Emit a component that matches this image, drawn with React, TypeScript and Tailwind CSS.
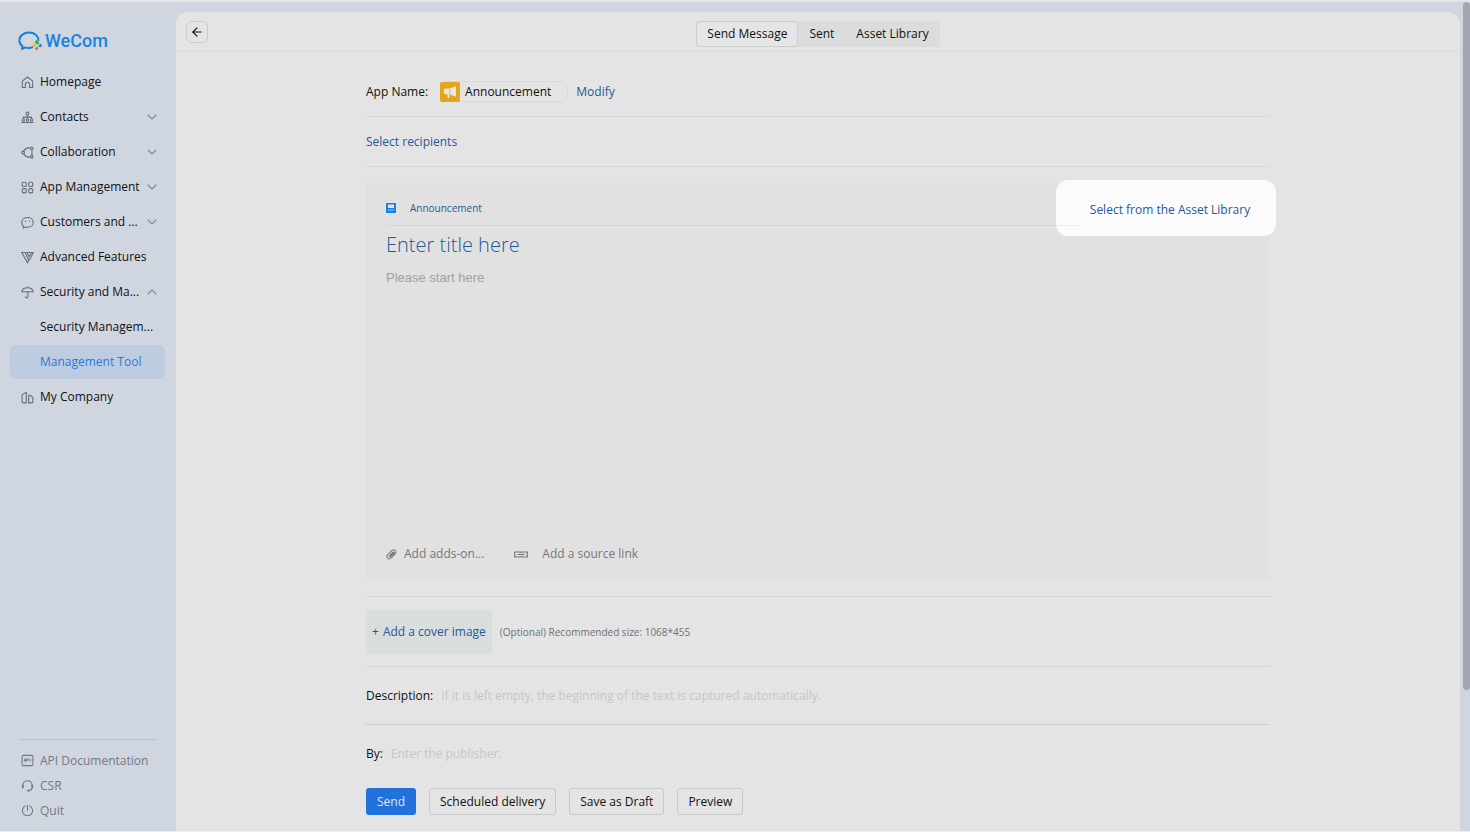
import type { ReactNode } from "react";
import { ArrowLeft, ChevronDown, ChevronUp } from "lucide-react";

const Icon = ({ children }: { children: ReactNode }) => (
  <svg
    viewBox="0 0 14 14"
    className="h-[13px] w-[13px] shrink-0"
    fill="none"
    stroke="currentColor"
    strokeWidth="1.15"
    strokeLinejoin="round"
    strokeLinecap="round"
    aria-hidden="true"
  >
    {children}
  </svg>
);

const icons: Record<string, ReactNode> = {
  home: (
    <Icon>
      <path d="M1.4 5.6 7 1.1l5.6 4.5v6.8H9.3V9.1a2.3 2.3 0 0 0-4.6 0v3.3H1.4z" />
    </Icon>
  ),
  contacts: (
    <Icon>
      <circle cx="7" cy="2.800" r="1.600" />
      <path d="M7 4.500v3M2.600 8V6.600h8.800V8" />
      <circle cx="2.600" cy="9.600" r="1.300" />
      <circle cx="7" cy="9.600" r="1.300" />
      <circle cx="11.400" cy="9.600" r="1.300" />
      <path d="M.8 12.400h3.600M5.200 12.400h3.600M9.600 12.400h3.600" />
    </Icon>
  ),
  collaboration: (
    <Icon>
      <circle cx="2.200" cy="7" r="1.500" />
      <circle cx="11.600" cy="2.500" r="1.400" />
      <circle cx="11.600" cy="11.500" r="1.400" />
      <path d="M3 5.700c1-2.300 3.600-4.100 7.200-3.500M3 8.300c1 2.300 3.600 4.100 7.200 3.500M11.800 4v6" />
    </Icon>
  ),
  apps: (
    <Icon>
      <rect x="1.300" y="1.300" width="4.400" height="4.600" rx="1.400" />
      <rect x="8.300" y="1.300" width="4.400" height="4.600" rx="1.400" />
      <rect x="1.300" y="8.200" width="4.400" height="4.600" rx="1.400" />
      <rect x="8.300" y="8.200" width="4.400" height="4.600" rx="1.400" />
    </Icon>
  ),
  customers: (
    <Icon>
      <path d="M7 1.700c3.500 0 6.200 2.200 6.200 5.200S10.500 12.100 7 12.100c-.8 0-1.600-.1-2.300-.3L2.300 12.900l.2-2.200C1.400 9.700.8 8.400.8 6.900.8 3.900 3.500 1.700 7 1.700z" />
      <path d="M4.900 5.300v.6M9.100 5.300v.6" />
    </Icon>
  ),
  features: (
    <Icon>
      <path d="M.8 1.700h3.600l3.900 7.900-1.200 3.200z" />
      <path d="M6.300 1.700h7L9 9.700M6.300 1.700l2.500 4.400 1.900-3.400" />
    </Icon>
  ),
  security: (
    <Icon>
      <path d="M.8 6.200C1.100 3.400 3.700 1.900 7 1.900s5.900 1.500 6.200 4.300zM7 .8v1.100M7.400 6.200v5.400c0 1.500-2.500 1.600-2.700 0" />
    </Icon>
  ),
  company: (
    <Icon>
      <path d="M1.200 3.900 5.700 1.200v11.600H2.200a1 1 0 0 1-1-1zM8.300 4.600h1.500l3 2.200v5a1 1 0 0 1-1 1H8.300z" />
    </Icon>
  ),
  api: (
    <Icon>
      <rect x="1.200" y="1.500" width="11.600" height="11" rx="1.300" />
      <path d="M3.500 7.500 4.300 5.300l.8 2.200M6.400 7.500V5.300h1.300v1.100H6.600M10 5.300v2.200" />
    </Icon>
  ),
  csr: (
    <Icon>
      <path d="M2 8.500V6.700a5 4.900 0 0 1 10 0v2.800c0 1.700-1.200 2.700-3.200 2.700" />
      <path d="M1.900 6.900v2.300M12.100 6.900v2.300M7.300 12.400h1.500" strokeWidth="1.900" />
    </Icon>
  ),
  quit: (
    <Icon>
      <path d="M4.600 2.200a5.500 5.500 0 1 0 4.800 0M7 1.300v5.500" />
    </Icon>
  ),
};

type NavItem = { label: string; icon?: string; arrow?: "up" | "down"; active?: boolean };

const navItems: NavItem[] = [
  { label: "Homepage", icon: "home" },
  { label: "Contacts", icon: "contacts", arrow: "down" },
  { label: "Collaboration", icon: "collaboration", arrow: "down" },
  { label: "App Management", icon: "apps", arrow: "down" },
  { label: "Customers and ...", icon: "customers", arrow: "down" },
  { label: "Advanced Features", icon: "features" },
  { label: "Security and Ma...", icon: "security", arrow: "up" },
  { label: "Security Managem..." },
  { label: "Management Tool", active: true },
  { label: "My Company", icon: "company" },
];

const footerItems = [
  { label: "API Documentation", icon: "api" },
  { label: "CSR", icon: "csr" },
  { label: "Quit", icon: "quit" },
];

const Logo = () => (
  <div className="flex h-6 items-center gap-[3px] pl-[18px] text-[#1683de]">
    <svg viewBox="0 0 24 20" className="h-5 w-6" fill="none" aria-hidden="true">
      <path
        d="M20.4 9.2C20.4 4.900 16.400 1.600 11 1.600S1.400 5 1.400 9.400c0 2.400 1.100 4.300 3.100 5.700L4 18l3.300-1.600c1.900.6 4.600.8 7-.1"
        stroke="currentColor"
        strokeWidth="2"
        strokeLinecap="round"
        strokeLinejoin="round"
      />
      <path d="m16.600 11.200 1.900-2.400 2.900 3.200-2 1.700z" fill="#3fae2a" />
      <path d="m20.200 14.900 2.500-2.400 1.300 2.200-1.900 1.800z" fill="#1683de" />
      <path d="m17 17.300 2.200-1.700 1.200 2-1.700 2.200z" fill="#e8632f" />
      <path d="m13.600 15 3-2.500 1.500 1.700-2.300 2.200z" fill="#f0b51d" />
    </svg>
    <span className="font-[Roboto] text-[18px] leading-6 font-medium">WeCom</span>
  </div>
);

const Sidebar = () => (
  <aside className="flex w-[176px] shrink-0 flex-col pt-[27px]">
    <Logo />
    <nav className="mt-3 flex flex-col gap-px pr-[11px] pl-[10px]">
      {navItems.map((item) => (
        <a
          key={item.label}
          href="#"
          className={`flex h-[34px] items-center rounded-md pr-[5px] pl-[11px] whitespace-nowrap ${
            item.active ? "bg-[#bdcce0] text-[#2d78dc]" : "text-[#111111]"
          }`}
        >
          <span className="w-[19px] shrink-0 text-[#666b75]">
            {item.icon && icons[item.icon]}
          </span>
          <span className="flex-1">{item.label}</span>
          {item.arrow === "down" && (
            <ChevronDown className="h-4 w-4 shrink-0 text-[#858a95]" strokeWidth={1.75} />
          )}
          {item.arrow === "up" && (
            <ChevronUp className="h-4 w-4 shrink-0 text-[#858a95]" strokeWidth={1.75} />
          )}
        </a>
      ))}
    </nav>
    <div className="mt-auto mr-5 mb-2 ml-5 border-t border-[#bac1cb] pt-2 text-[#737984]">
      {footerItems.map((item) => (
        <a
          key={item.label}
          href="#"
          className="flex h-[25px] items-center pl-px whitespace-nowrap"
        >
          <span className="w-[19px] shrink-0">{icons[item.icon]}</span>
          {item.label}
        </a>
      ))}
    </div>
  </aside>
);

const Tabs = () => (
  <div className="flex h-[26px] bg-[#dadddc]">
    <button className="rounded border border-[#cbcdcc] bg-[#e5e5e5] px-[10px]">
      Send Message
    </button>
    <button className="px-[11px]">Sent</button>
    <button className="px-[11px]">Asset Library</button>
  </div>
);

const Editor = () => (
  <section className="relative mt-4 flex min-h-[397px] flex-col bg-[#e1e1e1] px-5 pb-3">
    <div className="absolute -top-[3px] -right-[6px] flex h-14 w-[220px] items-center justify-center rounded-xl bg-[#fbfbfb] pt-1 pl-2">
      <a href="#" className="whitespace-nowrap text-[#25599b]">
        Select from the Asset Library
      </a>
    </div>
    <div className="relative mr-[169px] flex h-[43px] items-center border-b border-black/5 pt-2 text-[10px] font-medium text-[#25599b]">
      <svg viewBox="0 0 10 10" className="mr-[14px] h-[10px] w-[10px]" aria-hidden="true">
        <rect width="10" height="10" fill="#1485e6" />
        <path d="M2 1.500h6v3.500H2z" fill="#e1e1e1" />
        <path d="M2 6.500h6v1H2z" fill="#8fc0ec" />
      </svg>
      Announcement
    </div>
    <input
      aria-label="Title"
      placeholder="Enter title here"
      className="mt-[2px] h-8 text-[20px] font-light outline-none placeholder:text-[#25599b]"
    />
    <textarea
      aria-label="Content"
      placeholder="Please start here"
      className="mt-[10px] flex-1 resize-none font-['Liberation_Sans',sans-serif] text-[13px] leading-4 outline-none placeholder:text-[#a0a0a0]"
    />
    <div className="flex h-7 items-center text-[#777777]">
      <button className="flex items-center gap-[7px]">
        <svg
          viewBox="0 0 12 12"
          className="h-[11px] w-[11px]"
          fill="none"
          stroke="currentColor"
          strokeWidth="1.1"
          strokeLinecap="round"
          strokeLinejoin="round"
          aria-hidden="true"
        >
          <path d="M3.800 8.200 8 3.900M1.600 6.300 6.300 1.700c2.500-2.300 5.900.8 3.800 3.300L5.700 9.800c-2.600 2.600-6.300-.7-4.100-3.500zM4.700 9l4.100-4.300c.8-1-.4-2-1.300-1.200L3.400 7.700" />
        </svg>
        Add adds-on...
      </button>
      <button className="ml-[30px] flex items-center gap-[14px]">
        <svg
          viewBox="0 0 14 7"
          className="h-[7px] w-[14px]"
          fill="none"
          stroke="currentColor"
          strokeWidth="1.200"
          aria-hidden="true"
        >
          <path d="M6.200 2V1H.7v5h5.500V5M7.800 2V1h5.500v5H7.800V5M3.500 3.500h7" />
        </svg>
        Add a source link
      </button>
    </div>
  </section>
);

const buttonClass = "h-[27px] rounded-[3px] border border-[#c8c8c8] px-[10px]";

const MessageForm = () => (
  <form className="mx-auto w-full max-w-[904px] pb-4">
    <div className="flex items-center border-b border-[#d8d8d8] pt-[29px] pb-[14px]">
      <span>App Name:</span>
      <span className="ml-3 flex h-[21px] items-center rounded-md border border-[#dadada] pr-4">
        <svg viewBox="0 0 20 20" className="-ml-px h-5 w-5" aria-hidden="true">
          <rect width="20" height="20" rx="2" fill="#e2a51d" />
          <path
            d="M5 6.500h4.300L16 4.200v10.600l-6.700-2.600v3.900H7.600v-3.900H5c-1.800-.6-1.800-5 0-5.700z"
            fill="#eee8dc"
          />
          <path d="M9.700 6.500v5.700" stroke="#e2a51d" strokeWidth=".7" />
        </svg>
        <span className="ml-[5px]">Announcement</span>
      </span>
      <a href="#" className="ml-2 text-[#25599b]">
        Modify
      </a>
    </div>
    <div className="flex h-[50px] items-center border-b border-[#d8d8d8]">
      <a href="#" className="text-[#25599b]">
        Select recipients
      </a>
    </div>
    <Editor />
    <div className="mt-4 flex items-center border-y border-[#d4d4d4] pt-[13px] pb-3">
      <button
        type="button"
        className="flex h-11 items-center gap-1 bg-[#d9dddd] px-[6px] text-[#25599b]"
      >
        <span>+</span>
        <span>Add a cover image</span>
      </button>
      <span className="ml-2 text-[10px] text-[#707070]">
        (Optional) Recommended size: 1068*455
      </span>
    </div>
    <div className="flex h-[58px] items-center gap-2 border-b border-[#cdcdcd]">
      <label htmlFor="description">Description:</label>
      <input
        id="description"
        placeholder="If it is left empty, the beginning of the text is captured automatically."
        className="flex-1 outline-none placeholder:text-[#c6c6c6]"
      />
    </div>
    <div className="flex h-[58px] items-center gap-2">
      <label htmlFor="publisher">By:</label>
      <input
        id="publisher"
        placeholder="Enter the publisher."
        className="flex-1 outline-none placeholder:text-[#c6c6c6]"
      />
    </div>
    <div className="mt-[5px] flex gap-[13px]">
      <button
        type="button"
        className="h-[27px] rounded-[3px] bg-[#2272dc] px-[11px] text-[#e4e4e4]"
      >
        Send
      </button>
      <button type="button" className={buttonClass}>
        Scheduled delivery
      </button>
      <button type="button" className={buttonClass}>
        Save as Draft
      </button>
      <button type="button" className={buttonClass}>
        Preview
      </button>
    </div>
  </form>
);

const App = () => {
  return (
    <div className="flex min-h-screen border-t-2 border-b-2 border-t-[#e4e4e4] border-b-[#e6effc] bg-[#d0d6e0] font-['Open_Sans','Noto_Sans',sans-serif] text-[12px] leading-4 text-[#111111]">
      <Sidebar />
      <main className="mt-[10px] min-w-0 flex-1 rounded-t-xl bg-[#e4e4e4]">
        <header className="grid h-10 grid-cols-[1fr_auto_1fr] items-center border-b border-[#dadada] px-[10px] pt-1">
          <button
            aria-label="Back"
            className="mb-1 flex h-[22px] w-[22px] items-center justify-center rounded-md border border-[#cccccc]"
          >
            <ArrowLeft className="h-[14px] w-[14px]" />
          </button>
          <Tabs />
        </header>
        <MessageForm />
      </main>
      <div className="flex w-[10px] shrink-0 justify-end">
        <div className="h-[83%] w-[7px] rounded-sm bg-[#a3a6b1]" />
      </div>
    </div>
  );
};

export default App;
